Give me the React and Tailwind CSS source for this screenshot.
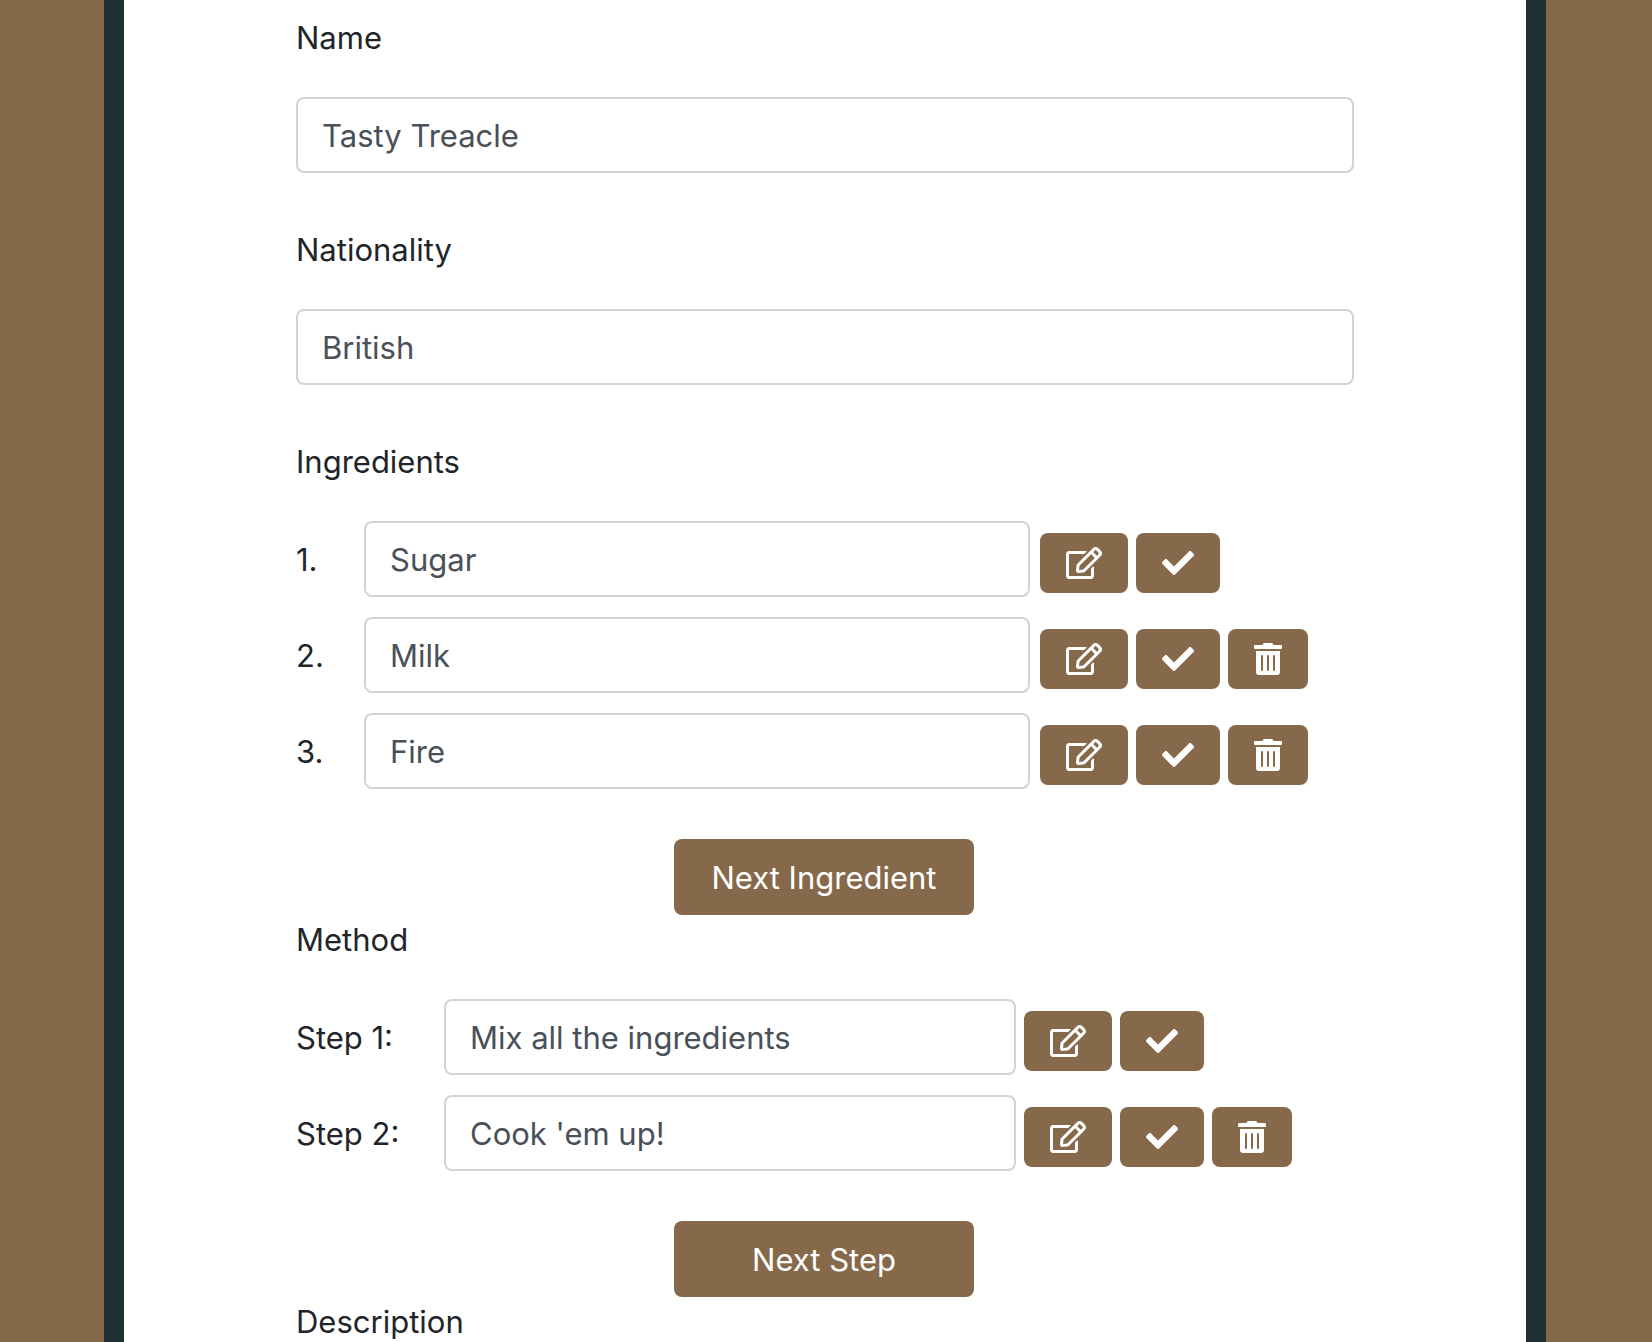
import { FaCheck, FaRegEdit, FaTrashAlt } from "react-icons/fa";

const inputStyle =
  "h-[76px] min-w-0 rounded-lg border-2 border-[#ced4da] bg-white px-6 text-[31px] text-[#495057] outline-none";

function Field({ id, label, value }) {
  return (
    <div className="mb-[52px] flex flex-col">
      <label htmlFor={id} className="mb-9 h-12 leading-[50px]">
        {label}
      </label>
      <input id={id} type="text" defaultValue={value} className={`${inputStyle} w-full`} />
    </div>
  );
}

function IconButton({ label, children }) {
  return (
    <button
      type="button"
      aria-label={label}
      className="flex h-[60px] items-center rounded-lg bg-[#86694a] px-[26px] text-white"
    >
      {children}
    </button>
  );
}

function Actions({ name, removable, className }) {
  return (
    <div className={`mb-1 flex shrink-0 gap-2 self-end ${className}`}>
      <IconButton label={`Edit ${name}`}>
        <FaRegEdit className="h-8 w-9" />
      </IconButton>
      <IconButton label={`Confirm ${name}`}>
        <FaCheck className="size-8" />
      </IconButton>
      {removable && (
        <IconButton label={`Delete ${name}`}>
          <FaTrashAlt className="h-8 w-7" />
        </IconButton>
      )}
    </div>
  );
}

function EntryList({ title, prefix, suffix, items, labelClass, gapClass, actionsClass, addLabel }) {
  return (
    <section>
      <h2 className="mb-9 h-12 leading-[50px]">{title}</h2>
      <div className="flex flex-col gap-5">
        {items.map((item, i) => {
          const id = `${title.toLowerCase()}-${i + 1}`;
          const label = `${prefix}${i + 1}${suffix}`;
          return (
            <div key={id} className="flex items-center">
              <label htmlFor={id} className={`shrink-0 pt-0.5 ${labelClass}`}>
                {label}
              </label>
              <input
                id={id}
                type="text"
                defaultValue={item}
                className={`${inputStyle} flex-1 ${gapClass}`}
              />
              <Actions name={item} removable={i > 0} className={actionsClass} />
            </div>
          );
        })}
      </div>
      <div className="mt-[50px] flex justify-center pr-0.5">
        <button
          type="button"
          className="h-[76px] w-[300px] rounded-lg bg-[#86694a] pt-0.5 text-white"
        >
          {addLabel}
        </button>
      </div>
    </section>
  );
}

export default function App() {
  return (
    <div className="h-screen overflow-hidden bg-[#86694a] pr-[106px] pl-[104px] font-['Inter',sans-serif] text-[31px] text-[#212529]">
      <main className="min-h-full border-x-20 border-[#1d2f32] bg-white px-[172px] pt-[13px]">
        <form>
          <Field id="name" label="Name" value="Tasty Treacle" />
          <Field id="nationality" label="Nationality" value="British" />
          <EntryList
            title="Ingredients"
            prefix=""
            suffix="."
            items={["Sugar", "Milk", "Fire"]}
            labelClass="w-[68px]"
            gapClass="mr-2.5"
            actionsClass="w-[314px]"
            addLabel="Next Ingredient"
          />
          <EntryList
            title="Method"
            prefix="Step "
            suffix=":"
            items={["Mix all the ingredients", "Cook 'em up!"]}
            labelClass="w-[148px]"
            gapClass="mr-2"
            actionsClass="w-[330px]"
            addLabel="Next Step"
          />
          <h2 className="h-12 leading-[50px]">Description</h2>
        </form>
      </main>
    </div>
  );
}
